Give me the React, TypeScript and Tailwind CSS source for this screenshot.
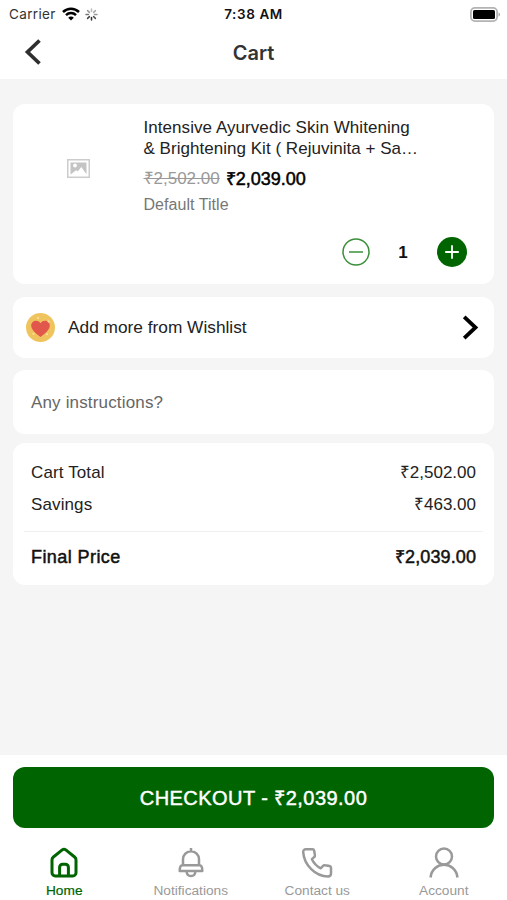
import type { ReactNode } from "react";

const card = "mx-[13px] rounded-xl bg-white";

function StatusBar() {
  return (
    <div className="grid h-[27px] grid-cols-3 items-center text-[13.5px] leading-[27px]">
      <div className="flex items-center pl-[9px] font-['Inter',sans-serif] text-[#333]">
        <span className="w-[47px] whitespace-nowrap pt-px text-[13.5px] tracking-[0.35px]">Carrier</span>
        <svg className="ml-[6px]" width="18" height="14" viewBox="0 0 18 14" fill="none" stroke="#000" strokeWidth="2.5">
          <path d="M1 5C5.6.5 12.4.5 17 5" />
          <path d="M4 8.1C6.8 5.4 11.2 5.4 14 8.1" />
          <path d="M9 13.5 6.2 10.7C7.8 9.2 10.2 9.2 11.8 10.7Z" fill="#000" stroke="none" />
        </svg>
        <svg className="ml-[5px]" width="13" height="13" viewBox="0 0 13 13" stroke="#777" strokeWidth="1.5" strokeLinecap="round">
          <path d="M6.500 1v2.500" stroke="#bbb" />
          <path d="m10.400 2.600-1.800 1.800" stroke="#aaa" />
          <path d="M12 6.500H9.500" stroke="#999" />
          <path d="m10.400 10.400-1.800-1.800" stroke="#555" />
          <path d="M6.500 12V9.500" stroke="#333" />
          <path d="m2.600 10.400 1.800-1.800" stroke="#444" />
          <path d="M1 6.500h2.500" />
          <path d="m2.600 2.600 1.800 1.800" stroke="#999" />
        </svg>
      </div>
      <div className="pt-px text-center font-['Inter',sans-serif] text-[13.5px] font-semibold tracking-[0.6px] text-[#111]">7:38 AM</div>
      <div className="flex justify-end pr-[6px]">
        <svg width="31" height="15" viewBox="0 0 31 15">
          <rect x=".9" y=".9" width="26.200" height="13.200" rx="4" fill="#fff" stroke="#b3b3b3" strokeWidth="1.800" />
          <rect x="3" y="3" width="22" height="9" rx="1.500" fill="#000" />
          <path d="M28.500 5.500c2 .5 2 3.500 0 4Z" fill="#aaa" />
        </svg>
      </div>
    </div>
  );
}

function Header() {
  return (
    <header className="h-[79px] bg-white">
      <StatusBar />
      <div className="grid h-[50px] grid-cols-3 items-center">
        <svg className="ml-[24px]" width="18" height="26" viewBox="0 0 18 26" fill="none" stroke="#2f2f2f" strokeWidth="3.7">
          <path d="M15.500 1.500 3.500 13l12 11.500" />
        </svg>
        <h1 className="pt-px text-center font-['Inter',sans-serif] text-[20px] font-semibold text-[#333]">Cart</h1>
      </div>
    </header>
  );
}

function Product() {
  return (
    <section className={`${card} mt-[25px] flex h-[180px]`}>
      <div className="flex w-[130px] justify-center pt-[55px]">
        <svg width="23" height="19" viewBox="0 0 23 19" fill="none">
          <rect x=".75" y=".75" width="21.500" height="17.500" stroke="#ccc" strokeWidth="1.500" />
          <path d="M3.500 3.500h16v11.800l-5.200-7.200-3.600 4.300-1.500-1.200-5.700 4.300Z" fill="#c4c4c4" />
          <circle cx="8" cy="6.500" r="1.900" fill="#fff" />
        </svg>
      </div>
      <div className="flex-1 pl-[0.5px] pt-[12px] text-[#222]">
        <div className="h-[22px] whitespace-nowrap text-[17px] leading-[23px] tracking-[0.06px]">Intensive Ayurvedic Skin Whitening</div>
        <div className="h-[22px] whitespace-nowrap text-[17px] leading-[22px] tracking-[0.03px]">&amp; Brightening Kit ( Rejuvinita + Sa…</div>
        <div className="mt-[8px] flex h-[22px] items-center gap-[6px] whitespace-nowrap text-[17px] leading-[22px]">
          <span className="text-[#999] line-through">₹2,502.00</span>
          <span className="text-[18px] text-black [-webkit-text-stroke:0.5px_black]">₹2,039.00</span>
        </div>
        <div className="mt-[4px] h-[22px] text-[16px] leading-[22px] tracking-[0.05px] text-[#777]">Default Title</div>
        <div className="mt-[21px] flex items-center justify-end pr-[27px]">
          <svg width="30" height="30" viewBox="0 0 30 30" fill="none" stroke="#3a8f3a" strokeWidth="1.500">
            <circle cx="15" cy="15" r="13" />
            <path d="M8 15h14" />
          </svg>
          <span className="w-[66px] pr-[2px] pt-[2px] text-center text-[17px] font-bold text-[#111]">1</span>
          <svg width="30" height="30" viewBox="0 0 30 30" stroke="#fff" strokeWidth="1.800">
            <circle cx="15" cy="15" r="15" fill="#006500" stroke="none" />
            <path d="M8.200 15h13.600M15 8.200v13.600" />
          </svg>
        </div>
      </div>
    </section>
  );
}

function Wishlist() {
  return (
    <section className={`${card} mt-[13px] flex h-[61px] items-center pl-[13px] pr-[15px]`}>
      <svg width="29" height="29" viewBox="0 0 29 29">
        <circle cx="14.500" cy="14.500" r="14.500" fill="#efc45e" />
        <path d="M14.500 24C10.500 21 5.200 17 5.200 12.600 5.200 7.300 12 6 14.500 10.200 17 6 23.800 7.300 23.800 12.600c0 4.400-5.300 8.400-9.300 11.400Z" fill="#e2574c" />
        <g fill="#f8e7a8">
          <circle cx="12" cy="5" r="1" />
          <circle cx="22.500" cy="8.500" r="1" />
          <circle cx="7.500" cy="20.800" r="1" />
          <circle cx="21" cy="21.200" r="1" />
        </g>
      </svg>
      <span className="ml-[13px] flex-1 pt-px text-[17.3px] text-[#222]">Add more from Wishlist</span>
      <svg width="17" height="26" viewBox="0 0 17 26" fill="none" stroke="#000" strokeWidth="3.800">
        <path d="M2.200 1.800 13.500 12.500 2.200 23.200" />
      </svg>
    </section>
  );
}

function Row({ label, value }: { label: string; value: string }) {
  return (
    <div className="flex h-[32px] items-center justify-between text-[17px] text-[#222]">
      <span className="tracking-[0.12px]">{label}</span>
      <span>{value}</span>
    </div>
  );
}

function Totals() {
  return (
    <section className={`${card} mt-[9px] h-[142px] px-[11px] pt-[14px]`}>
      <div className="px-[7px]">
        <Row label="Cart Total" value="₹2,502.00" />
        <Row label="Savings" value="₹463.00" />
      </div>
      <div className="mt-[10px] h-px bg-[#f0f0f0]" />
      <div className="mt-[9px] flex h-[32px] items-center justify-between px-[7px] text-[18px] text-[#111] [-webkit-text-stroke:0.5px_#111]">
        <span className="tracking-[0.42px]">Final Price</span>
        <span className="-mr-[0.12px] tracking-[0.12px]">₹2,039.00</span>
      </div>
    </section>
  );
}

function Tab({ label, active, children }: { label: string; active?: boolean; children: ReactNode }) {
  return (
    <div className={`flex flex-col items-center ${active ? "text-[#006500]" : "text-[#999]"}`}>
      <svg width="32" height="32" viewBox="0 0 32 32" fill="none" stroke="currentColor" strokeWidth="2.500" strokeLinejoin="round">
        {children}
      </svg>
      <span className={`mt-[3px] text-[13.7px] leading-[18px] ${active ? "[-webkit-text-stroke:0.2px_#006500]" : ""}`}>{label}</span>
    </div>
  );
}

function Footer() {
  return (
    <footer className="h-[145px] bg-white pt-[12px]">
      <button className="mx-[13px] flex h-[61px] w-[481px] items-center justify-center rounded-xl bg-[#006500] pt-px text-[20px] tracking-[0.45px] text-white [-webkit-text-stroke:0.45px_white]">
        CHECKOUT - ₹2,039.00
      </button>
      <nav className="mt-[19px] grid grid-cols-4 pl-px">
        <Tab label="Home" active>
          <path d="M4 12.800c0-1.200.5-2.100 1.400-2.800l8.800-7.100a2.900 2.900 0 0 1 3.600 0l8.800 7.100c.9.700 1.400 1.600 1.400 2.800v12.900a3.200 3.200 0 0 1-3.200 3.200H7.200A3.200 3.200 0 0 1 4 25.700Z" strokeWidth="3" />
          <path d="M11.600 28.900V20.200a3 3 0 0 1 3-3h2.800a3 3 0 0 1 3 3v8.700" strokeWidth="3" />
        </Tab>
        <Tab label="Notifications">
          <path d="M16 1v3.500M8 18.300v-6a8 8 0 0 1 16 0v6M7.500 18.300h17c2 0 2.800 2 2.800 5.700H4.700c0-3.700.8-5.700 2.800-5.700ZM11.500 24c.5 6.700 8.500 6.700 9 0" />
        </Tab>
        <Tab label="Contact us">
          <path d="M5 2.200h6.500c1 0 1.500.6 1.700 1.500l.7 4.400c.1.900-.1 1.600-.8 2.100l-2.200 2c1.900 4 4.900 7.100 9 9.100l2-2.300c.6-.7 1.300-.9 2.200-.7l4.400.8c1 .2 1.500.8 1.500 1.700v5.800c0 1.800-1.200 2.900-3 2.900C14.500 29.500 3 18 2.200 5.200 2.100 3.300 3.200 2.200 5 2.200Z" />
        </Tab>
        <Tab label="Account">
          <circle cx="16" cy="9.500" r="8" />
          <path d="M2.500 30.500C4.500 13.500 27.500 13.500 29.500 30.500" />
        </Tab>
      </nav>
    </footer>
  );
}

export default function App() {
  return (
    <div className="flex h-[900px] w-[507px] flex-col overflow-hidden bg-[#f5f5f5] font-['Liberation_Sans',Arial,sans-serif]">
      <Header />
      <main className="flex-1">
        <Product />
        <Wishlist />
        <section className={`${card} mt-[12px] flex h-[64px] items-center pl-[18px] pt-[2px] text-[17px] tracking-[0.16px] text-[#666]`}>Any instructions?</section>
        <Totals />
      </main>
      <Footer />
    </div>
  );
}
